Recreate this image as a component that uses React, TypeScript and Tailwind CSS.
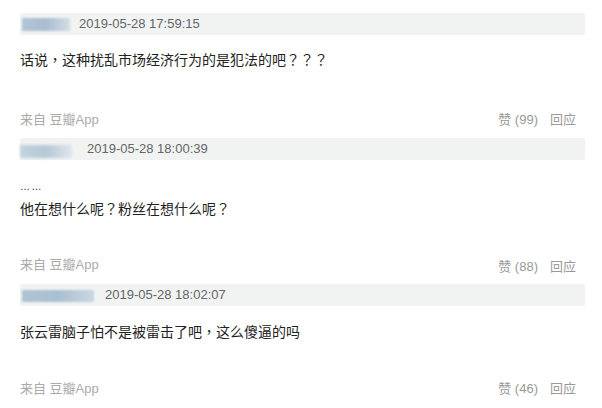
import React from 'react';

interface Comment {
  id: number;
  time: string;
  likes: number;
}

const comments: Comment[] = [
  { id: 1, time: '2019-05-28 17:59:15', likes: 99 },
  { id: 2, time: '2019-05-28 18:00:39', likes: 88 },
  { id: 3, time: '2019-05-28 18:02:07', likes: 46 },
];

const font = { fontFamily: '"Liberation Sans", "Noto Sans CJK SC", sans-serif' };

// full-width punctuation sits centred in the screenshot's font
const P: React.FC<{ c: string }> = ({ c }) => (
  <span className="leading-none" style={{ fontFamily: '"Noto Sans CJK TC", sans-serif' }}>{c}</span>
);

const Footer: React.FC<{ likes: number; offset?: string }> = ({ likes, offset = '' }) => (
  <div className="h-[20px] flex items-center justify-between pr-[6px] text-[13px]">
    <span className="text-[#aaa]">来自 豆瓣App</span>
    <span className={`flex gap-[12px] text-[#999] ${offset}`}>
      <span>赞 ({likes})</span>
      <span>回应</span>
    </span>
  </div>
);

const App: React.FC = () => {
  return (
    <div className="w-[602px] h-[408px] bg-white overflow-hidden px-[20px] pt-[13px]" style={font}>
      {/* comment 1 */}
      <div className="w-[565px] h-[22px] bg-[#f0f3f2] rounded-[2px] flex items-center">
        <div className="ml-[2px] w-[48px] h-[13px] bg-gradient-to-r from-[#b3c5d6] via-[#a9bdd0] to-[#d3dee6] blur-[1px]" />
        <span className="ml-[9px] text-[13px] text-[#666]">{comments[0].time}</span>
      </div>
      <div className="mt-[14px] mb-[39px] h-[22px] text-[14px] leading-[22px] text-[#222]">
        话说<P c="，" />这种扰乱市场经济行为的是犯法的吧<P c="？？？" />
      </div>
      <Footer likes={comments[0].likes} />

      {/* comment 2 */}
      <div className="mt-[8px] w-[565px] h-[22px] bg-[#f0f3f2] rounded-[2px] flex items-center">
        <div className="w-[52px] h-[13px] mt-[4px] bg-gradient-to-r from-[#c3d2de] via-[#b5c7d6] to-[#dde6ec] blur-[1.5px]" />
        <span className="ml-[15px] text-[13px] text-[#666]">{comments[1].time}</span>
      </div>
      <div className="mt-[16px] mb-[35px] text-[14px] leading-[22px] text-[#222]">
        <div className="h-[22px] text-[10px] leading-[22px] tracking-[1.5px]">……</div>
        <div className="h-[22px]">
          他在想什么呢<P c="？" />粉丝在想什么呢<P c="？" />
        </div>
      </div>
      <Footer likes={comments[1].likes} offset="mt-[4px]" />

      {/* comment 3 */}
      <div className="mt-[9px] w-[565px] h-[22px] bg-[#f0f3f2] rounded-[2px] flex items-center">
        <div className="ml-[2px] w-[72px] h-[12px] mt-[2px] bg-gradient-to-r from-[#b0c3d4] via-[#aabfd1] to-[#cad7e2] blur-[1px]" />
        <span className="ml-[11px] text-[13px] text-[#666]">{comments[2].time}</span>
      </div>
      <div className="mt-[15px] mb-[36px] h-[22px] text-[14px] leading-[22px] text-[#222]">
        张云雷脑子怕不是被雷击了吧<P c="，" />这么傻逼的吗
      </div>
      <Footer likes={comments[2].likes} />
    </div>
  );
};

export default App;
